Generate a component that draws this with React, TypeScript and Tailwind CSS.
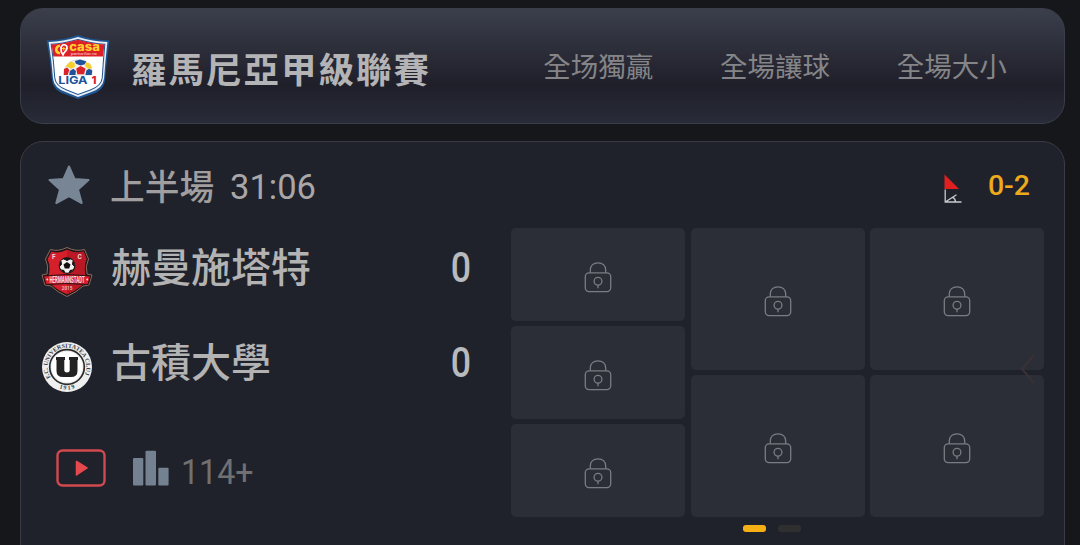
import React from 'react';

const MARKETS = ['全场獨贏', '全場讓球', '全場大小'];

// number of locked odds in each market column
const ODDS_COLUMNS = [3, 2, 2];

function LeagueLogo() {
  return (
    <svg width="66" height="66" viewBox="0 0 64 66" preserveAspectRatio="none" className="mt-0.5 shrink-0">
      <path d="M32 1 Q46 6 62.500 6.500 Q60 24 58.500 44 Q58 56 46 60 L32 65 L19 60 Q7 56 6.500 44 Q5 24 1.500 6.500 Q18 6 32 1Z" fill="#1f5590" />
      <path d="M32 3 Q46 7.500 60.500 8 Q58.500 26 57.300 44 Q56.500 54 45 58 L32 63 L20 58 Q8.500 54 7.700 44 Q6.500 27 3.500 8 Q18 7.500 32 3Z" fill="#e9eef7" />
      <path d="M32 5.500 Q46 9.500 58 10.300 Q56.500 27 55.500 44 Q54.500 52 44 56 L32 60.500 L21 56 Q10.500 52 9.500 44 Q8.500 27 6 10.300 Q18 9.500 32 5.500Z" fill="#fff" stroke="#24558f" strokeWidth="1" />
      <path d="M32 5.800 Q46 9.800 57.600 10.500 L56.300 22.500 H8 L6.500 10.500 Q18 9.800 32 5.800Z" fill="#dd2026" />
      <path d="M14.500 10.500 C8 11 8 20.500 14.500 20.500 V18.200 C11.500 17 11.500 13.500 14.500 12.800Z" fill="#ffd22e" />
      <path d="M15.500 13.500 C17 8.500 23 11 21 15.500 C20 17.500 18.500 18 17.500 20.800 L15.800 18Z" fill="none" stroke="#fff" strokeWidth="1.700" />
      <path d="M16.500 14.500 H20 M18.200 13 V16.500" stroke="#ffd22e" strokeWidth="1" />
      <text transform="translate(23.500 17) scale(1.100 1)" fontFamily="Inter, sans-serif" fontSize="11.500" fontWeight="800" fill="#ffd22e">casa</text>
      <text transform="translate(25 21.400) scale(1.500 1)" fontFamily="Roboto, sans-serif" fontSize="3.200" fontWeight="700" fill="#f4a7a0">pariurilor.ro</text>
      {/* ball */}
      <path d="M18.500 41 C17 33 24 25.800 32 25.800 S47 33 45.500 41 Z" fill="#f6efe6" stroke="#c8ccd8" strokeWidth="0.600" />
      <path d="M29 27 L34 25.400 L40 27.200 L38.700 30.300 L34.500 31.500 L30 29.800Z" fill="#20529c" />
      <path d="M20 32.300 L24.500 27.400 L28.700 29 L29 32.700 L25.500 34.700Z" fill="#f6cf2c" />
      <path d="M39.800 28.300 L43.500 29.500 L46 34.300 L41.500 34.700 L38.800 32Z" fill="#f6cf2c" />
      <path d="M30.300 34.500 L34.500 32 L39.300 34.500 L37.900 40.200 H31.300Z" fill="#d8232a" />
      <path d="M18.500 35 L21.500 33.600 L23.500 36 L22 41 H18.200Z" fill="#d8232a" />
      <path d="M24 37 L27.500 34.800 L30 37 L29.500 41 H23.500Z" fill="#20529c" />
      <path d="M40.200 36.200 L43 34.800 L45.800 36.500 L45.300 41 H39.200Z" fill="#20529c" />
      <text transform="translate(12.800 50.200) scale(1.120 1)" fontFamily="Inter, sans-serif" fontSize="11" fontWeight="700" fill="#20529c">LIGA</text>
      <text x="45" y="50.200" fontFamily="Inter, sans-serif" fontSize="11" fontWeight="800" fill="#d8232a">1</text>
    </svg>
  );
}

function HermannstadtLogo() {
  return (
    <svg width="52" height="52" viewBox="0 0 52 52">
      <path d="M9.500 3.500 Q17 6 26 1.500 Q35 6 43.500 3.500 L47.500 13 Q44 20 46 28 L51 29 L48 39 L42 40 Q36 46 26 50.500 Q16 46 10 40 L4 39 L1 29 L6 28 Q8 20 4.500 13Z" fill="#20151a" stroke="#8a6c5c" strokeWidth="1" />
      <path d="M10.500 5.500 Q18 8 26 3.800 Q34 8 42.500 5.500 L45.500 13 Q42 21 44.500 30 L42 38 Q36 44 26 48.300 Q16 44 10 38 L7.500 30 Q10 21 6.500 13Z" fill="#d51f2b" />
      <path d="M26 3.800 Q34 8 42.500 5.500 L45.500 13 Q42 21 44.500 30 L42 38 Q36 44 26 48.300Z" fill="#b91824" />
      <text x="11" y="13" fontFamily="Roboto, sans-serif" fontSize="6.500" fontWeight="700" fill="#f0d9d9">F</text>
      <text x="36.500" y="13" fontFamily="Roboto, sans-serif" fontSize="6.500" fontWeight="700" fill="#f0d9d9">C</text>
      <circle cx="26" cy="19.500" r="8.300" fill="#111" />
      <circle cx="26" cy="19.500" r="7.300" fill="#f3f1ef" />
      <path d="M26 16 L29.500 18.500 L28.200 22.500 H23.800 L22.500 18.500Z" fill="#111" />
      <path d="M22.500 12.800 Q26 11.500 29.500 12.800 L26 14.500Z M32 15.500 L33.300 20 L31.500 18.500Z M20 15.500 L18.700 20 L20.500 18.500Z M20.500 24 L23 24.500 L23.500 26.500Z M31.500 24 L29 24.500 L28.500 26.500Z" fill="#111" stroke="#111" strokeWidth="1" />
      <path d="M2.500 30 Q26 27 49.500 30 L47 38.500 Q26 36.500 5 38.500Z" fill="#d51f2b" stroke="#2a1116" strokeWidth="1" />
      <text transform="translate(8.500 36.800) scale(0.520 1)" fontFamily="Roboto, sans-serif" fontSize="8.500" fontWeight="700" fill="#f6dfe0">HERMANNSTADT</text>
      <circle cx="6.300" cy="33.500" r="0.900" fill="#f6dfe0" />
      <circle cx="46.200" cy="33.500" r="0.900" fill="#f6dfe0" />
      <text transform="translate(20.800 44) scale(0.750 1)" fontFamily="Roboto, sans-serif" fontSize="6.200" fontWeight="500" fill="#f6c9cb">2015</text>
    </svg>
  );
}

function ClujLogo() {
  return (
    <svg width="52" height="52" viewBox="0 0 52 52">
      <circle cx="26" cy="26" r="25" fill="#efefef" />
      <circle cx="26" cy="26" r="17.300" fill="none" stroke="#2b2b2b" strokeWidth="1.700" />
      <circle cx="26" cy="26" r="15.300" fill="#fff" />
      <path id="ringTop" d="M9.800 36.500 A19.300 19.300 0 1 1 42.200 36.500" fill="none" />
      <text fontFamily="Liberation Serif, serif" fontSize="6" fontWeight="700" fill="#3a3a3a">
        <textPath href="#ringTop" textLength="79">F.C. UNIVERSITATEA CLUJ</textPath>
      </text>
      <path id="ringBottom" d="M15 45.800 A22.800 22.800 0 0 0 37 45.800" fill="none" />
      <text fontFamily="Liberation Serif, serif" fontSize="6" fontWeight="700" fill="#3a3a3a">
        <textPath href="#ringBottom" startOffset="3.500" textLength="16">1919</textPath>
      </text>
      <path d="M15 16 H24 V19 H23.300 V29.500 Q23.300 31.500 26 31.500 Q28.700 31.500 28.700 29.500 V19 H28 V16 H37 V19 H36.500 V30 Q36.500 36 30 36 H22 Q15.500 36 15.500 30 V19 H15Z" fill="#232323" />
    </svg>
  );
}

function CornerIcon() {
  return (
    <svg width="18" height="30" viewBox="0 0 18 30" className="mt-1">
      <path d="M0.500 0.500 L15 15 H0.500Z" fill="#e02020" />
      <path d="M1.200 15.500 V28 H17.500 M1.200 28 L12.500 20.700 M8.500 23.200 Q11.500 24.700 11.500 28" fill="none" stroke="#c9cad0" strokeWidth="1.300" />
    </svg>
  );
}

function LockIcon() {
  return (
    <svg width="28" height="32" viewBox="0 0 28 32" fill="none" stroke="#7b7c83" strokeWidth="1.300">
      <path d="M6.300 11.800 V9 C6.300 4.300 9.500 1.800 14 1.800 S21.700 4.300 21.700 9 V11.800" />
      <rect x="1.300" y="11.800" width="25.400" height="18.800" rx="3.800" />
      <circle cx="14" cy="20.200" r="3.900" />
      <path d="M14 24.100 V27.300" />
    </svg>
  );
}

function TeamRow({ logo, name, score }: { logo: React.ReactNode; name: string; score: number }) {
  return (
    <div className="flex h-[95px] items-center">
      <div className="w-[70px] shrink-0 pt-2">{logo}</div>
      <span className="flex-1 pb-[5px] text-[40px] leading-none font-medium text-[#b3b3b4]">{name}</span>
      <span className="mr-[30px] w-10 text-center font-[Roboto] text-[42px] leading-none font-medium text-[#b9babd]">
        <span className="inline-block scale-x-85">{score}</span>
      </span>
    </div>
  );
}

export default function App() {
  return (
    <div className="flex h-[545px] w-[1080px] flex-col gap-[17px] overflow-hidden bg-[#16171b] pt-2 pr-[15px] pl-5 font-['Noto_Sans_CJK_TC',sans-serif]">
      {/* League header */}
      <header className="flex h-[116px] shrink-0 items-center rounded-[23px] border border-[#3a3e4a] bg-linear-to-b from-[#3b3f4c] via-[#1f1f2a] via-67% to-[#282c38] pl-6">
        <LeagueLogo />
        <h1 className="ml-5 flex-1 pt-1 text-[35.500px] leading-none font-bold tracking-[2px] whitespace-nowrap text-[#b4b4b6]">
          羅馬尼亞甲級聯賽
        </h1>
        <div className="mr-6 grid w-[530px] grid-cols-3">
          {MARKETS.map((market) => (
            <span key={market} className="text-center text-[27.500px] leading-none text-[#858588]">
              {market}
            </span>
          ))}
        </div>
      </header>

      {/* Match card */}
      <section className="flex h-[430px] shrink-0 flex-col rounded-t-[23px] border border-[#3a3b47] bg-[#20222b] pr-5 pl-5">
        <div className="flex h-[86px] shrink-0 items-center pt-1">
          <svg width="42" height="40" viewBox="0 0 42 40" className="mb-1 ml-[7px]">
            <path d="M21 1.500 L26.500 14 L40.500 15 L30 24.500 L33.700 38 L21 31 L8.300 38 L12 24.500 L1.500 15 L15.500 14Z" fill="#778594" stroke="#778594" strokeWidth="2" strokeLinejoin="round" />
          </svg>
          <span className="ml-5 pb-1 text-[34.700px] leading-none font-medium text-[#a09e9f]">上半場</span>
          <span className="ml-4 font-[Roboto] text-[34.500px] leading-none text-[#a9a7a8]">31:06</span>
          <div className="mr-[14px] ml-auto flex items-center gap-[26px]">
            <CornerIcon />
            <span className="pb-0.5 font-[Roboto] text-[28.500px] leading-none font-medium text-[#efa91d]">0-2</span>
          </div>
        </div>

        <div className="flex">
          <div className="flex w-[470px] flex-col">
            <div className="-mt-2">
              <TeamRow logo={<HermannstadtLogo />} name="赫曼施塔特" score={0} />
              <TeamRow logo={<ClujLogo />} name="古積大學" score={0} />
            </div>
            <div className="mt-9 flex items-center pl-[15px]">
              <svg width="50" height="38" viewBox="0 0 50 38" className="shrink-0">
                <rect x="1.500" y="1.500" width="47" height="35" rx="5" fill="none" stroke="#d2494e" strokeWidth="2.400" />
                <path d="M20.500 12.500 L31 19 L20.500 26Z" fill="#e5484d" stroke="#e5484d" strokeWidth="1.500" strokeLinejoin="round" />
              </svg>
              <svg width="36" height="36" viewBox="0 0 36 36" className="ml-[27px] shrink-0" fill="#748190">
                <rect x="0" y="8" width="10.300" height="27.500" rx="1" />
                <rect x="12.500" y="0.800" width="10.500" height="34.700" rx="1" />
                <rect x="25.300" y="17.800" width="10.300" height="17.700" rx="1" />
              </svg>
              <span className="ml-3 origin-left scale-x-92 pt-[9px] font-[Roboto] text-[35px] leading-none text-[#707072]">114+</span>
            </div>
          </div>

          <div className="relative flex h-[289px] flex-1 gap-[5.500px]">
            {ODDS_COLUMNS.map((count, col) => (
              <div key={col} className="flex flex-1 flex-col gap-[5px]">
                {Array.from({ length: count }, (_, i) => (
                  <button key={i} className="flex flex-1 items-center justify-center rounded-[5px] bg-[#2c2e37] pt-1">
                    <LockIcon />
                  </button>
                ))}
              </div>
            ))}
            <svg width="16" height="32" viewBox="0 0 16 32" className="absolute right-2 bottom-[132px]">
              <path d="M14 2 L2 16 L14 30" fill="none" stroke="#3a3137" strokeWidth="2" />
            </svg>
          </div>
        </div>

        {/* Pager */}
        <div className="mt-2 ml-[702px] flex gap-3">
          <span className="h-[7px] w-[23px] rounded-[3px] bg-[#f6b016]" />
          <span className="h-[7px] w-[23px] rounded-[3px] bg-[#302f30]" />
        </div>
      </section>
    </div>
  );
}
